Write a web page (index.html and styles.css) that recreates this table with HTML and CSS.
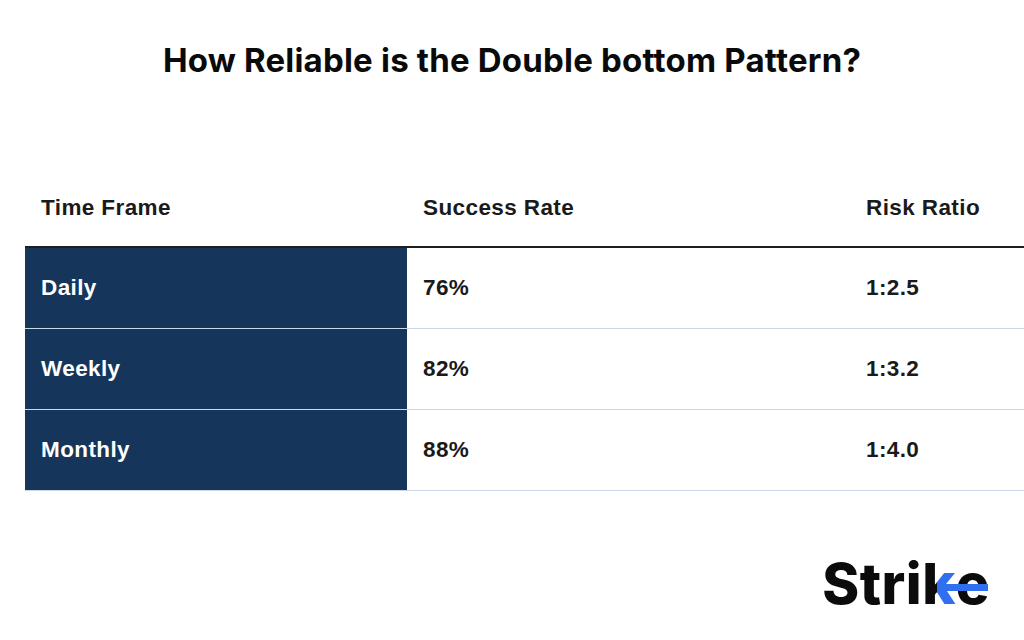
FILE: index.html
```html
<!DOCTYPE html>
<html lang="en">
<head>
<meta charset="utf-8">
<title>How Reliable is the Double bottom Pattern?</title>
<link rel="stylesheet" href="styles.css">
</head>
<body>
<div class="page">
  <h1 class="title">How Reliable is the Double bottom Pattern?</h1>
  <table class="data">
    <colgroup>
      <col class="c1"><col class="c2"><col class="c3">
    </colgroup>
    <thead>
      <tr><th>Time Frame</th><th>Success Rate</th><th>Risk Ratio</th></tr>
    </thead>
    <tbody>
      <tr><td class="label">Daily</td><td>76%</td><td>1:2.5</td></tr>
      <tr><td class="label">Weekly</td><td>82%</td><td>1:3.2</td></tr>
      <tr><td class="label">Monthly</td><td>88%</td><td>1:4.0</td></tr>
    </tbody>
  </table>
  <div class="footer">
    <div class="logo">Stri<span class="k">k</span>e</div>
  </div>
</div>
</body>
</html>
```

FILE: styles.css
```css
html, body {
  margin: 0;
  padding: 0;
  background: #ffffff;
}
body {
  width: 1024px;
  height: 640px;
  overflow: hidden;
}
.page {
  display: flex;
  flex-direction: column;
  padding-top: 40px;
}
.title {
  margin: 0;
  text-align: center;
  font-family: Inter, "Noto Sans", sans-serif;
  font-weight: 700;
  font-size: 33px;
  line-height: 40px;
  color: #0a0a0a;
  letter-spacing: 0.2px;
}
.data {
  margin-top: 82px;
  margin-left: 25px;
  width: 999px;
  border-collapse: collapse;
  table-layout: fixed;
  font-family: "Liberation Sans", Arial, sans-serif;
  font-weight: 700;
  font-size: 22.5px;
  color: #1a1a1a;
}
.c1 { width: 382px; }
.c2 { width: 443px; }
.c3 { width: 174px; }
.data th {
  text-align: left;
  height: 76px;
  padding: 8px 0 0 16px;
  vertical-align: middle;
  border-bottom: 2px solid #1e1e1e;
  letter-spacing: 0.4px;
  white-space: nowrap;
}
.data td {
  height: 80px;
  padding: 0 0 0 16px;
  border-bottom: 1px solid #cbd8e6;
  vertical-align: middle;
  letter-spacing: 0.4px;
  white-space: nowrap;
}
.data td.label {
  background: #15355a;
  color: #ffffff;
}
.footer {
  display: flex;
  justify-content: flex-end;
  padding-right: 34px;
  margin-top: 63px;
}
.logo {
  font-family: Inter, "Noto Sans", sans-serif;
  font-weight: 800;
  font-size: 56px;
  line-height: 60px;
  color: #0b0b0b;
  letter-spacing: 0.5px;
}
.k {
  position: relative;
  display: inline-block;
  background: linear-gradient(90deg, #0b0b0b 0, #0b0b0b 43%, #2f6ff0 43%, #2f6ff0 100%);
  -webkit-background-clip: text;
  background-clip: text;
  color: transparent;
}
.k::after {
  content: "";
  position: absolute;
  left: 16px;
  top: 30px;
  width: 50px;
  height: 6.5px;
  background: #2f6ff0;
}
```
